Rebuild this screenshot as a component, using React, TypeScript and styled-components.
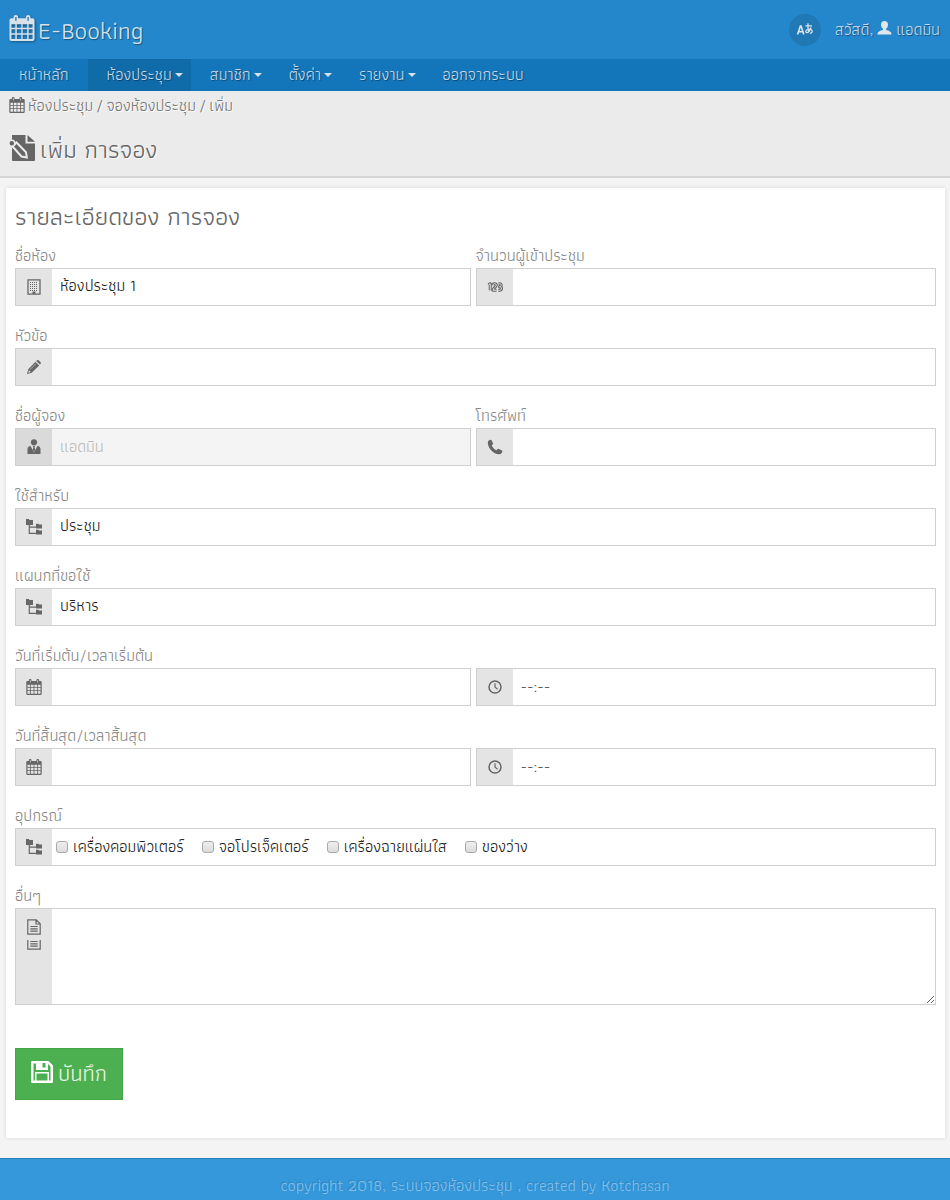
import React from "react";
import styled, { createGlobalStyle } from "styled-components";

const Global = createGlobalStyle`
  *, *::before, *::after { box-sizing: border-box; }
  body {
    margin: 0;
    background: #f4f4f4;
    color: #666;
    font-family: "Athiti", "Noto Sans Thai", "Noto Sans", "Liberation Sans", sans-serif;
    font-size: 16px;
    line-height: 22px;
  }
  button, input, select, textarea { font: inherit; }
`;

const Page = styled.div`
  display: flex;
  flex-direction: column;
  min-height: 100vh;
`;

const Header = styled.header`
  display: flex;
  align-items: center;
  justify-content: space-between;
  height: 59px;
  padding: 0 10px 0 9px;
  background: #2487cc;
  color: #c5d9e8;
  text-shadow: 1px 1px 1px rgba(0, 0, 0, 0.4);
`;

const Brand = styled.a`
  display: flex;
  align-items: center;
  gap: 3px;
  color: #d8e2ea;
  font-size: 25px;
  line-height: 32px;
  text-decoration: none;
  svg {
    margin-bottom: 4px;
    filter: drop-shadow(1px 1px 1px rgba(0, 0, 0, 0.4));
  }
`;

const UserArea = styled.div`
  display: flex;
  align-items: center;
  gap: 14px;
`;

const LangButton = styled.button`
  width: 32px;
  height: 32px;
  padding: 0;
  border: 0;
  border-radius: 50%;
  background: #2078b5;
  color: #dde6ed;
  display: flex;
  align-items: center;
  justify-content: center;
`;

const UserLink = styled.a`
  display: flex;
  align-items: center;
  gap: 4px;
  color: inherit;
  text-decoration: none;
  svg { margin-bottom: 3px; }
`;

const Nav = styled.nav`
  display: flex;
  height: 32px;
  background: #1376bb;
`;

const NavLink = styled.a<{ $active?: boolean; $menu?: boolean }>`
  display: flex;
  align-items: center;
  gap: 3px;
  padding: 0 ${(p) => (p.$menu ? 8 : 19)}px 0 19px;
  background: ${(p) => (p.$active ? "#106ba9" : "transparent")};
  color: #c5d9e8;
  text-decoration: none;
  text-shadow: 1px 1px 1px rgba(0, 0, 0, 0.4);
`;

const Caret = styled.span`
  border: 4px solid transparent;
  border-top-color: #d5e2ec;
  border-bottom: 0;
`;

const TitleBar = styled.div`
  height: 87px;
  padding: 4px 9px;
  background: #ebebeb;
  border-bottom: 2px solid #d4d4d4;
  text-shadow: 1px 1px 0 #fff;
`;

const Crumbs = styled.div`
  display: flex;
  align-items: center;
  gap: 3px;
  a, span { color: #777; text-decoration: none; }
  svg { margin-bottom: 2px; }
`;

const PageTitle = styled.h1`
  display: flex;
  align-items: center;
  gap: 5px;
  margin: 15px 0 0;
  font-size: 25px;
  line-height: 34px;
  font-weight: 400;
  svg { margin-bottom: 2px; }
`;

const Card = styled.main`
  margin: 10px 5px 20px 6px;
  padding: 11px 9px 38px;
  background: #fff;
  box-shadow: 0 0 4px rgba(0, 0, 0, 0.12);
`;

const SectionTitle = styled.h2`
  margin: 0 0 13px;
  font-size: 25px;
  line-height: 34px;
  font-weight: 400;
`;

const Row = styled.div`
  display: grid;
  grid-auto-flow: column;
  grid-auto-columns: minmax(0, 1fr);
  align-items: end;
  margin-bottom: 20px;
`;

const Field = styled.div`
  &:not(:last-child) { padding-right: 5px; }
`;

const Label = styled.label`
  display: block;
  height: 22px;
  line-height: 20px;
  color: #888;
  white-space: nowrap;
`;

const Box = styled.div<{ $disabled?: boolean; $tall?: boolean }>`
  display: flex;
  height: ${(p) => (p.$tall ? 97 : 38)}px;
  border: 1px solid #cfcfcf;
  background: ${(p) => (p.$disabled ? "#f4f4f4" : "#fff")};
`;

const Addon = styled.span<{ $disabled?: boolean; $tall?: boolean }>`
  flex: 0 0 36px;
  display: flex;
  flex-direction: column;
  align-items: center;
  justify-content: ${(p) => (p.$tall ? "flex-start" : "center")};
  gap: 5px;
  padding-top: ${(p) => (p.$tall ? 10 : 0)}px;
  background: ${(p) => (p.$disabled ? "#dadada" : "#e4e4e4")};
  color: #666;
`;

const Input = styled.input`
  flex: 1;
  min-width: 0;
  padding: 0 8px;
  border: 0;
  background: transparent;
  color: #222;
  &::placeholder { color: #555; }
  &:disabled { color: #bbb; }
`;

const Select = styled.select`
  flex: 1;
  min-width: 0;
  padding: 0 8px 2px;
  border: 0;
  appearance: none;
  background: transparent;
  color: #222;
`;

const TextArea = styled.textarea`
  flex: 1;
  min-width: 0;
  padding: 8px;
  border: 0;
  background: transparent;
  resize: vertical;
`;

const Checks = styled.div`
  display: flex;
  align-items: center;
  gap: 18px;
  padding-left: 4px;
`;

const Check = styled.label`
  display: flex;
  align-items: center;
  gap: 5px;
  color: #222;
  white-space: nowrap;
`;

const Tick = styled.input`
  appearance: none;
  width: 12px;
  height: 12px;
  margin: 0;
  border: 1px solid #aaa;
  border-radius: 3px;
  background: linear-gradient(#eee, #dcdcdc);
`;

const SaveButton = styled.button`
  display: flex;
  align-items: center;
  gap: 5px;
  height: 52px;
  margin-top: 43px;
  padding: 0 15px;
  border: 1px solid #43a547;
  background: #4caf50;
  color: #e6f4e6;
  font-size: 22px;
  svg { margin-bottom: 4px; }
`;

const Footer = styled.footer`
  flex: 1 0 42px;
  padding-top: 16px;
  border-top: 1px solid #2980b9;
  background: #3498db;
  color: #85bfe8;
  text-align: center;
  text-shadow: -1px -1px 1px rgba(0, 0, 0, 0.15);
  a { color: inherit; text-decoration: none; }
`;

const Calendar = ({ size = 16 }: { size?: number }) => (
  <svg width={size} height={size} viewBox="0 0 16 16" fill="currentColor" aria-hidden="true">
    <path fillRule="evenodd" d="M1.500 2h1.300V1.400a1.400 1.400 0 0 1 2.800 0V2h4.800v-.6a1.400 1.400 0 0 1 2.800 0V2h1.300a1.200 1.200 0 0 1 1.200 1.200v11.600a1.200 1.200 0 0 1-1.200 1.200h-13a1.200 1.200 0 0 1-1.200-1.200V3.200A1.200 1.200 0 0 1 1.500 2zM3.900 1.200v2.300h.7V1.200zM11.400 1.200v2.300h.7V1.200zM1.500 5.700v2.200h2.400V5.700zM4.800 5.700v2.200h2.800V5.700zM8.400 5.700v2.200h2.800V5.700zM12.100 5.700v2.200h2.400V5.700zM1.500 8.800v2.400h2.400V8.800zM4.800 8.800v2.400h2.800V8.800zM8.400 8.800v2.400h2.800V8.800zM12.100 8.800v2.400h2.400V8.800zM1.500 12.100v2.600h2.400v-2.600zM4.800 12.100v2.600h2.800v-2.600zM8.400 12.100v2.600h2.800v-2.600zM12.100 12.100v2.600h2.400v-2.600z" />
  </svg>
);

const User = () => (
  <svg width="15" height="14" viewBox="0 0 15 14" fill="#dfe7ed" aria-hidden="true">
    <path d="M7.500 0C5.300 0 4 1.600 4 3.700c0 1.700.8 3.300 1.900 4.100v1.100C3 9.400.5 10.800.5 13v.5h14V13c0-2.200-2.500-3.600-5.400-4.100V7.800C10.200 7 11 5.400 11 3.700 11 1.600 9.700 0 7.500 0z" />
  </svg>
);

const Language = () => (
  <svg width="18" height="16" viewBox="0 0 18 16" fill="none" stroke="currentColor" aria-hidden="true">
    <path strokeWidth="1.600" d="M1.500 12.500L4.400 4h.6l2.800 8.500M2.500 9.800h4.400" />
    <path strokeWidth="1.200" d="M9.500 3.800h6.500M12 1.200c-.3 4 0 7 .8 9M15 5.300c-.8 3-2.500 5.300-4.200 5.300-1.700 0-1.500-3.200 2.300-3.500 3.600-.2 4.400 3.300.8 4.300" />
  </svg>
);

const EditDoc = () => (
  <svg width="26" height="26" viewBox="0 0 26 26" fill="#666" aria-hidden="true">
    <path d="M3 0h13.500v8.500H26V25a1 1 0 0 1-1 1H4a1 1 0 0 1-1-1V11H2V7h1zM18.500 0L26 6.800h-7.500z" />
    <path stroke="#ebebeb" strokeWidth="2" d="M3.500 11.500l4-4 9.500 9.700.8 5.300-5.300-1z" />
    <circle cx="2.800" cy="8.300" r="3" stroke="#ebebeb" strokeWidth="1.500" />
  </svg>
);

const Building = () => (
  <svg width="14" height="16" viewBox="0 0 14 16" fill="none" stroke="currentColor" aria-hidden="true">
    <path strokeWidth="1.300" d="M1 .8h12v14.400H1z" />
    <path strokeWidth="1" strokeDasharray="1 1" d="M3 3.500h8M3 5.500h8M3 7.500h8M3 9.500h8M3 11.500h8" />
    <path fill="currentColor" stroke="none" d="M5.500 12.500h3V15h-3z" />
  </svg>
);

const Digits = () => (
  <svg width="16" height="10" viewBox="0 0 16 10" fill="none" stroke="currentColor" aria-hidden="true">
    <path strokeWidth="3" strokeLinejoin="round" d="M1.500 3l1.700-1.300v6.600M6 3.200c0-2 3.300-2 3.300 0C9.300 5 6 6 6 8.200h3.500M11.500 1.700h1.200c2 0 2 3-.2 3 2.700 0 2.500 3.600.3 3.600h-1.500" />
    <path stroke="#e4e4e4" strokeWidth="1" d="M1.500 3l1.700-1.300v6.600M6 3.200c0-2 3.300-2 3.300 0C9.300 5 6 6 6 8.200h3.500M11.500 1.700h1.200c2 0 2 3-.2 3 2.700 0 2.500 3.600.3 3.600h-1.500" />
  </svg>
);

const Pencil = () => (
  <svg width="14" height="14" viewBox="0 0 14 14" fill="currentColor" aria-hidden="true">
    <path fillRule="evenodd" d="M8.500 1.800l3.700 3.700-7.500 7.300L0 14l1.200-4.800zM1.900 10.300l-.6 2.400 2.400-.6zM9.300 1l.8-.7c.5-.4 1-.4 1.500 0l2 2c.5.5.5 1 0 1.500l-.7.800z" />
    <path stroke="#e4e4e4" strokeWidth=".6" d="M3 9.500l6-6" />
  </svg>
);

const Person = () => (
  <svg width="14" height="16" viewBox="0 0 14 16" fill="currentColor" aria-hidden="true">
    <circle cx="7" cy="3.300" r="3.100" />
    <path d="M3.500 7L7 13.500 10.500 7c2 .3 3 1.400 3 3.200V15H.5v-4.800C.5 8.400 1.500 7.300 3.500 7zM6 7h2l-.4 1.400.7 2.400L7 12.700l-1.300-1.900.7-2.400z" />
  </svg>
);

const Phone = () => (
  <svg width="16" height="16" viewBox="0 0 16 16" fill="currentColor" aria-hidden="true">
    <path d="M.8 3.500C1 1.800 2.200.8 3.700.7c.5 0 .8.300 1 .7l1.300 2.800c.2.600.1 1-.4 1.400l-.9.700c.8 2.200 2.600 4.100 4.800 5l.9-1.100c.4-.5.9-.6 1.400-.3l2.900 1.400c.5.3.7.600.6 1.100-.3 1.700-1.500 2.900-3.400 2.900C6.500 15.300.8 9.300.8 3.500z" />
  </svg>
);

const Tree = () => (
  <svg width="16" height="16" viewBox="0 0 16 16" fill="currentColor" aria-hidden="true">
    <path d="M0 0h3l.6.900H7V6H0zM10 4.800h2.500l.5.800h3v4h-6zM10 10.800h2.500l.5.800h3v4h-6z" />
    <path fill="none" stroke="currentColor" strokeWidth="1.200" d="M3.300 6v8.300H10M3.300 8.200H10" />
  </svg>
);

const Clock = () => (
  <svg width="14" height="14" viewBox="0 0 14 14" fill="none" stroke="currentColor" aria-hidden="true">
    <circle cx="7" cy="7" r="6" strokeWidth="1.500" />
    <path strokeWidth="1.200" d="M7 3.200V7l2.500 2.300" />
  </svg>
);

const FileText = () => (
  <svg width="14" height="16" viewBox="0 0 14 16" fill="none" stroke="currentColor" strokeWidth="1.200" aria-hidden="true">
    <path d="M.8.800h8.400l4 4v10.400H.8zM9 .8v4.200h4.200M3.300 7.500h7.400M3.300 9.800h7.400M3.300 12.200h7.400" />
  </svg>
);

const FileTextEnd = () => (
  <svg width="14" height="10" viewBox="0 6 14 10" fill="none" stroke="currentColor" strokeWidth="1.200" aria-hidden="true">
    <path d="M.8 6v9.200h12.400V6M3.300 7.500h7.400M3.300 9.800h7.400M3.300 12.200h7.400" />
  </svg>
);

const Save = () => (
  <svg width="22" height="22" viewBox="0 0 22 22" fill="#fff" aria-hidden="true">
    <path fillRule="evenodd" d="M1 0h16.500L22 4.500V21a1 1 0 0 1-1 1H1a1 1 0 0 1-1-1V1a1 1 0 0 1 1-1zM2.500 2.500v17H4V11h14v8.500h1.500V5.500L17 3v6H5V2.500zM11.500 2v4.500h3V2zM5.500 12.500v7h11v-7z" />
  </svg>
);

type FieldProps = {
  id: string;
  label?: string;
  name?: string;
  icon: React.ReactNode;
  value?: string;
  placeholder?: string;
  disabled?: boolean;
  options?: string[];
};

const FormField = ({ id, label, name, icon, value, placeholder, disabled, options }: FieldProps) => (
  <Field>
    {label && <Label htmlFor={id}>{label}</Label>}
    <Box $disabled={disabled}>
      <Addon $disabled={disabled}>{icon}</Addon>
      {options ? (
        <Select id={id} defaultValue={options[0]}>
          {options.map((o) => (
            <option key={o}>{o}</option>
          ))}
        </Select>
      ) : (
        <Input id={id} aria-label={name} defaultValue={value} placeholder={placeholder} disabled={disabled} />
      )}
    </Box>
  </Field>
);

const menu = [
  { text: "หน้าหลัก" },
  { text: "ห้องประชุม", menu: true, active: true },
  { text: "สมาชิก", menu: true },
  { text: "ตั้งค่า", menu: true },
  { text: "รายงาน", menu: true },
  { text: "ออกจากระบบ" },
];

const accessories = ["เครื่องคอมพิวเตอร์", "จอโปรเจ็คเตอร์", "เครื่องฉายแผ่นใส", "ของว่าง"];

export default function App() {
  return (
    <Page>
      <Global />
      <Header>
        <Brand href="#"><Calendar size={26} />E-Booking</Brand>
        <UserArea>
          <LangButton type="button" aria-label="ภาษา"><Language /></LangButton>
          <UserLink href="#"><span>สวัสดี,</span><User /><span>แอดมิน</span></UserLink>
        </UserArea>
      </Header>
      <Nav>
        {menu.map((m) => (
          <NavLink key={m.text} href="#" $active={m.active} $menu={m.menu}>
            {m.text}
            {m.menu && <Caret />}
          </NavLink>
        ))}
      </Nav>
      <TitleBar>
        <Crumbs>
          <Calendar />
          <a href="#">ห้องประชุม</a>/<a href="#">จองห้องประชุม</a>/<span>เพิ่ม</span>
        </Crumbs>
        <PageTitle><EditDoc />เพิ่ม การจอง</PageTitle>
      </TitleBar>
      <Card>
        <form onSubmit={(e) => e.preventDefault()}>
          <SectionTitle>รายละเอียดของ การจอง</SectionTitle>
          <Row>
            <FormField id="room" label="ชื่อห้อง" icon={<Building />} options={["ห้องประชุม 1"]} />
            <FormField id="attendees" label="จำนวนผู้เข้าประชุม" icon={<Digits />} />
          </Row>
          <Row>
            <FormField id="topic" label="หัวข้อ" icon={<Pencil />} />
          </Row>
          <Row>
            <FormField id="contact" label="ชื่อผู้จอง" icon={<Person />} value="แอดมิน" disabled />
            <FormField id="phone" label="โทรศัพท์" icon={<Phone />} />
          </Row>
          <Row>
            <FormField id="use" label="ใช้สำหรับ" icon={<Tree />} options={["ประชุม"]} />
          </Row>
          <Row>
            <FormField id="department" label="แผนกที่ขอใช้" icon={<Tree />} options={["บริหาร"]} />
          </Row>
          <Row>
            <FormField id="begin-date" label="วันที่เริ่มต้น/เวลาเริ่มต้น" icon={<Calendar />} />
            <FormField id="begin-time" name="เวลาเริ่มต้น" icon={<Clock />} placeholder="--:--" />
          </Row>
          <Row>
            <FormField id="end-date" label="วันที่สิ้นสุด/เวลาสิ้นสุด" icon={<Calendar />} />
            <FormField id="end-time" name="เวลาสิ้นสุด" icon={<Clock />} placeholder="--:--" />
          </Row>
          <Row>
            <Field>
              <Label as="div" id="accessories">อุปกรณ์</Label>
              <Box role="group" aria-labelledby="accessories">
                <Addon><Tree /></Addon>
                <Checks>
                  {accessories.map((a) => (
                    <Check key={a}><Tick type="checkbox" />{a}</Check>
                  ))}
                </Checks>
              </Box>
            </Field>
          </Row>
          <Row>
            <Field>
              <Label htmlFor="comment">อื่นๆ</Label>
              <Box $tall>
                <Addon $tall><FileText /><FileTextEnd /></Addon>
                <TextArea id="comment" />
              </Box>
            </Field>
          </Row>
          <SaveButton type="submit"><Save />บันทึก</SaveButton>
        </form>
      </Card>
      <Footer>
        copyright 2018, <a href="#">ระบบจองห้องประชุม</a> , created by <a href="#">Kotchasan</a>
      </Footer>
    </Page>
  );
}
